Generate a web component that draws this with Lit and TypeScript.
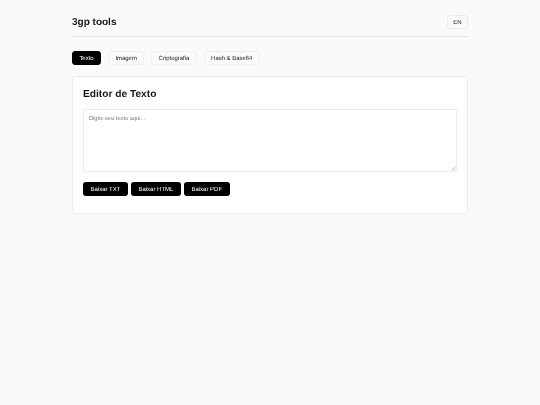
import { LitElement, html, css } from "lit";
import { customElement } from "lit/decorators.js";

@customElement("app-root")
export class AppRoot extends LitElement {
  static styles = css`
    :host { display: block; min-height: 405px; background: #fafafa; font-family: "Liberation Sans", Arial, sans-serif; color: #171717; text-rendering: geometricPrecision; }
    .wrap { width: 396px; margin: 0 auto; padding-top: 15px; box-sizing: border-box; filter: blur(0.2px); }
    header { display: flex; justify-content: space-between; align-items: center; padding-bottom: 7px; border-bottom: 1px solid #e5e5e5; }
    h1 { margin: 0; padding-top: 1px; font-size: 10px; font-weight: 700; line-height: 13px; }
    .lang { width: 21px; height: 14px; box-sizing: border-box; border: 1px solid #ececec; border-radius: 3px; background: #fafafa; font: 400 6px "Liberation Sans", sans-serif; color: #171717; padding: 1px 0 0; display: flex; align-items: center; justify-content: center; text-rendering: geometricPrecision; }
    nav { display: flex; gap: 7px; margin-top: 14px; }
    .tab { height: 14px; box-sizing: border-box; padding: 1px 6.4px 0; border: 1px solid #f0f0f0; border-radius: 3px; background: #fafafa; font: 400 5.95px "Liberation Sans", sans-serif; color: #222; display: flex; align-items: center; text-rendering: geometricPrecision; }
    .tab.on { background: #000; border-color: #000; color: #fff; }
    .card { margin-top: 11px; background: #fff; border: 1px solid #ececec; border-radius: 2.5px; padding: 10px; height: 137.5px; box-sizing: border-box; }
    h2 { margin: 0; padding-top: 1px; font-size: 10.2px; font-weight: 700; line-height: 13px; }
    .field { position: relative; margin-top: 8px; }
    textarea { display: block; width: 100%; height: 63px; box-sizing: border-box; border: 1px solid #ececec; border-radius: 2px; padding: 6px 5px 5px; font: 400 5.7px "Liberation Sans", sans-serif; background: #fff; outline: none; resize: none; text-rendering: geometricPrecision; }
    textarea::placeholder { color: #777; }
    .grip { position: absolute; right: 1px; bottom: 1px; width: 5px; height: 5px; pointer-events: none; }
    .actions { display: flex; gap: 3px; margin-top: 10px; }
    .btn { height: 14px; box-sizing: border-box; padding: 1px 7.5px 0; border: 0; border-radius: 3px; background: #000; color: #fff; font: 400 6px "Liberation Sans", sans-serif; display: flex; align-items: center; text-rendering: geometricPrecision; }
  `;
  render() {
    return html`<div class="wrap">
      <header><h1>3gp tools</h1><button class="lang">EN</button></header>
      <nav>
        <button class="tab on">Texto</button>
        <button class="tab">Imagem</button>
        <button class="tab">Criptografia</button>
        <button class="tab">Hash &amp; Base64</button>
      </nav>
      <section class="card">
        <h2>Editor de Texto</h2>
        <div class="field">
          <textarea placeholder="Digite seu texto aqui..."></textarea>
          <svg class="grip" viewBox="0 0 5 5" fill="none" stroke="#999" stroke-width="0.6"><path d="M0.5 4.5 4.5 0.5M2.7 4.5 4.5 2.7"/></svg>
        </div>
        <div class="actions">
          <button class="btn">Baixar TXT</button>
          <button class="btn">Baixar HTML</button>
          <button class="btn">Baixar PDF</button>
        </div>
      </section>
    </div>`;
  }
}
